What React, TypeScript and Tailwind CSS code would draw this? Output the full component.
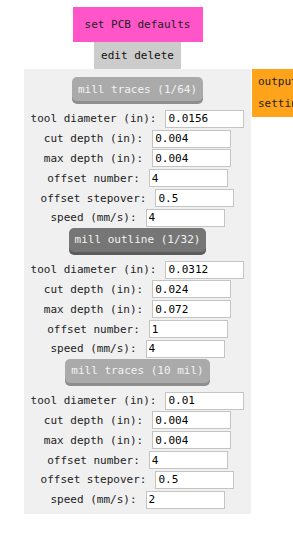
import React from "react";

type Field = { label: string; value: string };

interface Section {
  title: string;
  dark?: boolean;
  fields: Field[];
}

const sections: Section[] = [
  {
    title: "mill traces (1/64)",
    fields: [
      { label: "tool diameter (in):", value: "0.0156" },
      { label: "cut depth (in):", value: "0.004" },
      { label: "max depth (in):", value: "0.004" },
      { label: "offset number:", value: "4" },
      { label: "offset stepover:", value: "0.5" },
      { label: "speed (mm/s):", value: "4" },
    ],
  },
  {
    title: "mill outline (1/32)",
    dark: true,
    fields: [
      { label: "tool diameter (in):", value: "0.0312" },
      { label: "cut depth (in):", value: "0.024" },
      { label: "max depth (in):", value: "0.072" },
      { label: "offset number:", value: "1" },
      { label: "speed (mm/s):", value: "4" },
    ],
  },
  {
    title: "mill traces (10 mil)",
    fields: [
      { label: "tool diameter (in):", value: "0.01" },
      { label: "cut depth (in):", value: "0.004" },
      { label: "max depth (in):", value: "0.004" },
      { label: "offset number:", value: "4" },
      { label: "offset stepover:", value: "0.5" },
      { label: "speed (mm/s):", value: "2" },
    ],
  },
];

const mono = "font-['DejaVu_Sans_Mono','Liberation_Mono',monospace]";

function FieldRow({ label, value }: Field) {
  return (
    <div className="flex h-[19.8px] items-center justify-center gap-[9px]">
      <span className="whitespace-pre text-[#222]">{label}</span>
      <input
        type="text"
        defaultValue={value}
        className={`h-[18px] w-[79px] border border-[#c4c4c4] bg-white px-[2px] text-[11px] text-black outline-none ${mono}`}
      />
    </div>
  );
}

export default function App() {
  return (
    <div
      className={`h-[537px] w-[293px] overflow-hidden bg-white pt-[7px] text-[11px] leading-none ${mono}`}
    >
      {/* module header buttons */}
      <div className="flex w-[251px] flex-col items-center pl-[24px]">
        <div className="flex h-[35px] w-[130px] items-center justify-center bg-[#ff55c8] text-[#222]">
          set PCB defaults
        </div>
        <div className="flex h-[27px] w-[87px] items-center justify-center bg-[#cccccc] text-[#111]">
          edit delete
        </div>
      </div>

      <div className="flex items-start pl-[24px]">
        {/* settings panel */}
        <div className="w-[227px] shrink-0 bg-[#f0f0f0] pt-[8px] pb-[4px]">
          {sections.map((s) => (
            <div key={s.title}>
              <div className="mb-[5px] flex justify-center">
                <button
                  className={`h-[24px] rounded-[5px] px-[6px] text-[#f2f2f2] ${
                    s.dark
                      ? "bg-[#767676] shadow-[0_3px_0_#5c5c5c]"
                      : "bg-[#aaaaaa] shadow-[0_3px_0_#8e8e8e]"
                  } mb-[3px] whitespace-pre`}
                >
                  {s.title}
                </button>
              </div>
              {s.fields.map((f) => (
                <FieldRow key={f.label} label={f.label} value={f.value} />
              ))}
            </div>
          ))}
        </div>

        {/* output settings module */}
        <div className="ml-[1px] w-[90px] shrink-0 bg-[#ffa31a] px-[6px] py-[2px] leading-[22px] text-[#222]">
          output settings
        </div>
      </div>
    </div>
  );
}
